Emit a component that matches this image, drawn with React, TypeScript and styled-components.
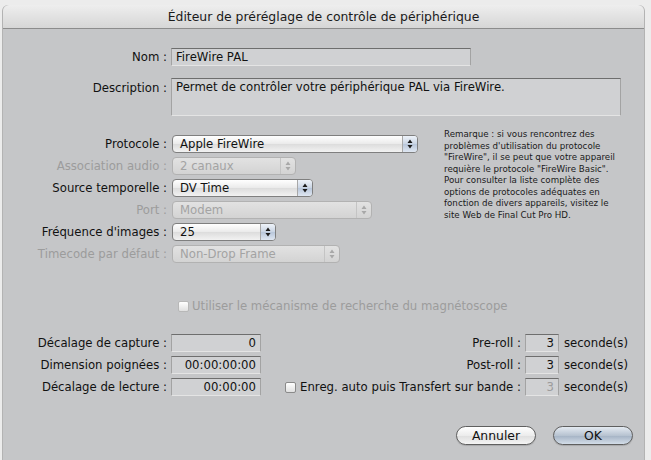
import styled, { createGlobalStyle } from 'styled-components';

const Global = createGlobalStyle`
    html, body {
        margin: 0;
        padding: 0;
        background: #ececec;
    }
    body {
        font-family: "DejaVu Sans", "Liberation Sans", sans-serif;
        font-size: 11.7px;
        color: #111;
    }
`;

const Window = styled.div`
    margin: 5px 7px 0 3px;
    height: 455px;
    background: #c5c6c8;
    border-radius: 6px 6px 0 0;
    box-shadow: 1px 0 0 #b3b3b3, -1px 0 0 #b3b3b3;
    display: flex;
    flex-direction: column;
`;

const TitleBar = styled.div`
    height: 23px;
    border-radius: 6px 6px 0 0;
    background: linear-gradient(#eeeeee, #d6d6d6);
    border-bottom: 1px solid #8c8c8c;
    display: flex;
    align-items: center;
    justify-content: center;
    font-size: 12.4px;
    color: #1a1a1a;
`;

const Body = styled.div`
    padding: 19px 11px 0 0;
    display: flex;
    flex-direction: column;
`;

const Row = styled.div<{ $gap?: number }>`
    display: flex;
    align-items: center;
    margin-bottom: ${p => p.$gap ?? 0}px;
`;

const Label = styled.span<{ $disabled?: boolean }>`
    width: 164px;
    flex: none;
    text-align: right;
    padding-right: 4px;
    white-space: nowrap;
    color: ${p => (p.$disabled ? '#9c9c9c' : '#111')};
`;

const Field = styled.div<{ $w: number; $h?: number; $right?: boolean; $disabled?: boolean }>`
    width: ${p => p.$w}px;
    height: ${p => p.$h ?? 17}px;
    box-sizing: border-box;
    background: #d0d1d3;
    border: 1px solid #a3a3a3;
    border-top-color: #6e6e6e;
    border-bottom-color: #e4e4e4;
    padding: 1px 4px;
    line-height: 14px;
    text-align: ${p => (p.$right ? 'right' : 'left')};
    color: ${p => (p.$disabled ? '#9c9c9c' : '#111')};
    white-space: nowrap;
`;

const Middle = styled.div`
    display: flex;
    margin-top: 19px;
`;

const Popups = styled.div`
    width: 430px;
    display: flex;
    flex-direction: column;
    gap: 4px;
`;

const Popup = styled.div<{ $w: number; $disabled?: boolean }>`
    width: ${p => p.$w}px;
    height: 18px;
    box-sizing: border-box;
    border: 1px solid ${p => (p.$disabled ? '#b2b2b2' : '#7f7f7f')};
    border-radius: 4px;
    background: ${p => (p.$disabled
        ? 'linear-gradient(#e2e2e2, #d3d3d3)'
        : 'linear-gradient(#ffffff, #eaeaea 50%, #dcdcdc 51%, #f2f2f2)')};
    color: ${p => (p.$disabled ? '#a3a3a3' : '#111')};
    display: flex;
    align-items: stretch;
    overflow: hidden;
    margin-left: 1px;
`;

const PopupText = styled.span`
    flex: 1;
    padding-left: 7px;
    line-height: 16px;
    white-space: nowrap;
`;

const Arrows = styled.span<{ $disabled?: boolean }>`
    width: 14px;
    border-left: 1px solid ${p => (p.$disabled ? '#c4c4c4' : '#a8a8a8')};
    background: ${p => (p.$disabled
        ? 'transparent'
        : 'linear-gradient(#eef3fa, #c9d4e3 50%, #b8c6da 51%, #dfe7f2)')};
    display: flex;
    align-items: center;
    justify-content: center;
`;

const Note = styled.p`
    margin: -6px 0 0 11px;
    width: 180px;
    font-size: 8.7px;
    line-height: 11.5px;
    color: #1a1a1a;
`;

const CheckRow = styled.div`
    display: flex;
    align-items: center;
    margin: 36px 0 0 175px;
    color: #9c9c9c;
    gap: 3px;
`;

const Box = styled.span<{ $disabled?: boolean }>`
    width: 11px;
    height: 11px;
    box-sizing: border-box;
    border: 1px solid ${p => (p.$disabled ? '#b8b8b8' : '#8a8a8a')};
    border-radius: 2px;
    background: linear-gradient(#ffffff, #e0e0e0);
    flex: none;
`;

const Bottom = styled.div`
    margin-top: 21px;
    padding-right: 5px;
    display: grid;
    grid-template-columns: 168px 90px 1fr 34px auto;
    grid-auto-rows: 18px;
    row-gap: 4px;
    align-items: center;
`;

const RightLabel = styled.span`
    display: flex;
    align-items: center;
    justify-content: flex-end;
    gap: 4px;
    padding-right: 4px;
    white-space: nowrap;
`;

const Unit = styled.span`
    padding-left: 5px;
    white-space: nowrap;
`;

const Buttons = styled.div`
    display: flex;
    justify-content: flex-end;
    gap: 17px;
    margin-top: 30px;
`;

const Button = styled.div<{ $primary?: boolean }>`
    width: 80px;
    height: 19px;
    box-sizing: border-box;
    border: 1px solid #5f5f5f;
    border-radius: 10px;
    display: flex;
    align-items: center;
    justify-content: center;
    font-size: 12.4px;
    background: ${p => (p.$primary
        ? 'linear-gradient(#e4eaf1, #b7c3d1 50%, #a4b2c4 51%, #d3dde8)'
        : 'linear-gradient(#ffffff, #ececec 50%, #dedede 51%, #f4f4f4)')};
    box-shadow: 0 1px 1px rgba(0, 0, 0, 0.15);
`;

const ArrowIcon = ({ disabled }: { disabled?: boolean }) => (
    <svg width="6" height="10" viewBox="0 0 6 10">
        <path d="M3 0.5 L5.5 4 H0.5 Z M3 9.5 L5.5 6 H0.5 Z" fill={disabled ? '#a8a8a8' : '#1c1c1c'} />
    </svg>
);

interface SelectProps {
    value: string
    width: number
    disabled?: boolean
}

const Select = (props: SelectProps) => (
    <Popup $w={props.width} $disabled={props.disabled}>
        <PopupText>{props.value}</PopupText>
        <Arrows $disabled={props.disabled}>
            <ArrowIcon disabled={props.disabled} />
        </Arrows>
    </Popup>
);

const popups: { label: string, value: string, width: number, disabled?: boolean }[] = [
    { label: 'Protocole :', value: 'Apple FireWire', width: 246 },
    { label: 'Association audio :', value: '2 canaux', width: 124, disabled: true },
    { label: 'Source temporelle :', value: 'DV Time', width: 141 },
    { label: 'Port :', value: 'Modem', width: 200, disabled: true },
    { label: "Fréquence d'images :", value: '25', width: 104 },
    { label: 'Timecode par défaut :', value: 'Non-Drop Frame', width: 168, disabled: true },
];

export default function App() {
    return (
        <>
            <Global />
            <Window>
                <TitleBar>Éditeur de préréglage de contrôle de périphérique</TitleBar>
                <Body>
                    <Row $gap={12}>
                        <Label>Nom :</Label>
                        <Field $w={300} $h={18}>FireWire PAL</Field>
                    </Row>
                    <Row style={{ alignItems: 'flex-start' }}>
                        <Label style={{ paddingTop: 3 }}>Description :</Label>
                        <Field $w={450} $h={38}>Permet de contrôler votre périphérique PAL via FireWire.</Field>
                    </Row>
                    <Middle>
                        <Popups>
                            {popups.map(p => (
                                <Row key={p.label}>
                                    <Label $disabled={p.disabled}>{p.label}</Label>
                                    <Select value={p.value} width={p.width} disabled={p.disabled} />
                                </Row>
                            ))}
                        </Popups>
                        <Note>
                            Remarque : si vous rencontrez des problèmes d'utilisation du protocole
                            "FireWire", il se peut que votre appareil requière le protocole "FireWire Basic".
                            Pour consulter la liste complète des options de protocoles adéquates en
                            fonction de divers appareils, visitez le site Web de Final Cut Pro HD.
                        </Note>
                    </Middle>
                    <CheckRow>
                        <Box $disabled />
                        Utiliser le mécanisme de recherche du magnétoscope
                    </CheckRow>
                    <Bottom>
                        <Label>Décalage de capture :</Label>
                        <Field $w={90} $h={18} $right>0</Field>
                        <RightLabel>Pre-roll :</RightLabel>
                        <Field $w={34} $h={18} $right>3</Field>
                        <Unit>seconde(s)</Unit>

                        <Label>Dimension poignées :</Label>
                        <Field $w={90} $h={18} $right>00:00:00:00</Field>
                        <RightLabel>Post-roll :</RightLabel>
                        <Field $w={34} $h={18} $right>3</Field>
                        <Unit>seconde(s)</Unit>

                        <Label>Décalage de lecture :</Label>
                        <Field $w={90} $h={18} $right>00:00:00</Field>
                        <RightLabel><Box />Enreg. auto puis Transfert sur bande :</RightLabel>
                        <Field $w={34} $h={18} $right $disabled>3</Field>
                        <Unit>seconde(s)</Unit>
                    </Bottom>
                    <Buttons>
                        <Button>Annuler</Button>
                        <Button $primary>OK</Button>
                    </Buttons>
                </Body>
            </Window>
        </>
    );
}
